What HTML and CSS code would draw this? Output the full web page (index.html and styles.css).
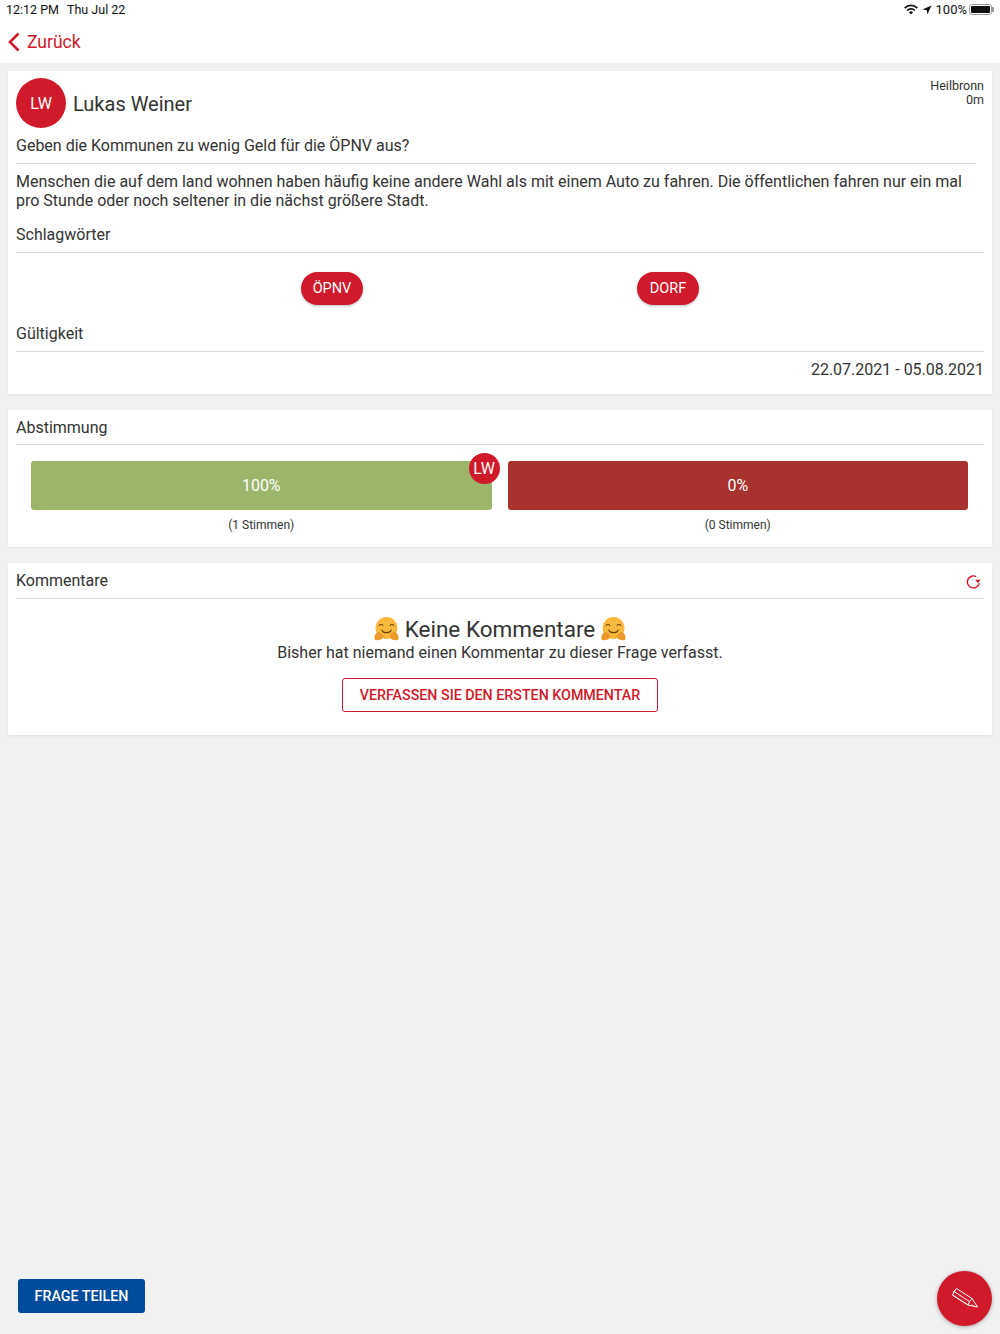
FILE: index.html
```html
<!DOCTYPE html>
<html lang="de">
<head>
  <meta charset="UTF-8">
  <meta name="viewport" content="width=device-width, initial-scale=1.0">
  <title>Frage</title>
  <link rel="stylesheet" href="styles.css">
</head>
<body>

  <svg class="sprite" width="0" height="0">
    <symbol id="hug" viewBox="0 0 24 24">
      <circle cx="12" cy="10.500" r="10.500" fill="#f9b93c"/>
      <path d="M5 8.200c.8-1.600 2.600-1.600 3.400 0M15.600 8.200c.8-1.600 2.600-1.600 3.400 0" fill="none" stroke="#6b4313" stroke-width="1.100" stroke-linecap="round"/>
      <path d="M7.500 12.500c1 3.400 8 3.400 9 0" fill="none" stroke="#6b4313" stroke-width="1.100" stroke-linecap="round"/>
      <path d="M.5 21c-.5-2.400 1-5.500 3-6.500 1.600-.8 4.500 1.500 5.500 3.500.6 1.300 0 2-1 2-.3 1.500-1.500 2.200-2.500 1.800C3.500 22.500 1 22.500.5 21z" fill="#ee9a2b"/>
      <path d="M23.500 21c.5-2.400-1-5.500-3-6.500-1.600-.8-4.500 1.500-5.500 3.500-.6 1.300 0 2 1 2 .3 1.500 1.500 2.200 2.500 1.800 2 .7 4.500.7 5-.8z" fill="#ee9a2b"/>
    </symbol>
  </svg>

  <div class="status-bar">
    <div class="status-left"><span>12:12 PM</span><span>Thu Jul 22</span></div>
    <div class="status-right">
      <svg class="wifi" width="14" height="11" viewBox="0 0 14 11"><path d="M7 10.500 4.900 8.300a3 3 0 0 1 4.200 0zM3.700 7.100 2.500 5.900a6.400 6.400 0 0 1 9 0l-1.200 1.200a4.700 4.700 0 0 0-6.600 0zM1.300 4.700 0 3.500a9.900 9.900 0 0 1 14 0l-1.300 1.200a8.100 8.100 0 0 0-11.400 0z" fill="#111"/></svg>
      <svg width="10" height="10" viewBox="0 0 10 10"><path d="M9.500.5 .5 4.600l4.300.6.600 4.300z" fill="#111"/></svg>
      <span>100%</span>
      <span class="battery"><span class="battery-fill"></span></span>
    </div>
  </div>

  <div class="nav-bar">
    <svg width="14" height="20" viewBox="0 0 14 20"><path d="M11.500 1.500 3 10l8.500 8.500" fill="none" stroke="#d0192a" stroke-width="2.600"/></svg>
    <span>Zurück</span>
  </div>

  <div class="content">
    <div class="card card-question">
      <div class="author">
        <div class="avatar">LW</div>
        <div class="author-name">Lukas Weiner</div>
        <div class="location">Heilbronn<br>0m</div>
      </div>
      <div class="question">Geben die Kommunen zu wenig Geld für die ÖPNV aus?</div>
      <div class="description">Menschen die auf dem land wohnen haben häufig keine andere Wahl als mit einem Auto zu fahren. Die öffentlichen fahren nur ein mal pro Stunde oder noch seltener in die nächst größere Stadt.</div>

      <div class="section-title section-title-tall">Schlagwörter</div>
      <div class="tags">
        <span class="tag">ÖPNV</span>
        <span class="tag">DORF</span>
      </div>

      <div class="section-title section-title-tall">Gültigkeit</div>
      <div class="validity">22.07.2021 - 05.08.2021</div>
    </div>

    <div class="card card-vote">
      <div class="section-title">Abstimmung</div>
      <div class="vote-bars">
        <div class="vote-col">
          <div class="bar bar-yes">100%<span class="bar-badge">LW</span></div>
          <div class="votes">(1 Stimmen)</div>
        </div>
        <div class="vote-col">
          <div class="bar bar-no">0%</div>
          <div class="votes">(0 Stimmen)</div>
        </div>
      </div>
    </div>

    <div class="card card-comments">
      <div class="section-title section-title-icon">
        <span>Kommentare</span>
        <svg width="15" height="15" viewBox="0 0 14 14"><path d="M12.400 8.500A5.600 5.600 0 1 1 9.500 2.400" fill="none" stroke="#d0192a" stroke-width="1.300"/><path d="M8.500 5.300h5.200l-2.600 3z" fill="#d0192a"/></svg>
      </div>
      <div class="empty">
        <div class="empty-title">
          <svg class="emoji" width="25" height="25"><use href="#hug"/></svg>
          <span>Keine Kommentare</span>
          <svg class="emoji" width="25" height="25"><use href="#hug"/></svg>
        </div>
        <div class="empty-text">Bisher hat niemand einen Kommentar zu dieser Frage verfasst.</div>
        <button class="btn-outline">VERFASSEN SIE DEN ERSTEN KOMMENTAR</button>
      </div>
    </div>
  </div>

  <div class="footer">
    <button class="btn-share">FRAGE TEILEN</button>
    <div class="fab">
      <svg width="28" height="24" viewBox="0 0 28 24"><g fill="none" stroke="#fff" stroke-width="1" stroke-linejoin="round"><path d="M3 4.500 5.500 1.500 21 11.500 26.500 20 17 18 1.500 8z"/><path d="M3 4.500 18.500 14.500 21 11.500M1.500 8 17 18l1.500-3.500M5 2.500c-1.500.5-2.500 2-2.500 3.500M21 17.500l2 2"/></g></svg>
    </div>
  </div>

</body>
</html>
```

FILE: styles.css
```css
* {
  box-sizing: border-box;
}

body {
  margin: 0;
  height: 1334px;
  display: flex;
  flex-direction: column;
  background: #f1f1f1;
  color: #333;
  font-family: Roboto, "Noto Sans", sans-serif;
  font-size: 16px;
  overflow: hidden;
}

.sprite {
  display: none;
}

/* Barras de arriba */
.status-bar {
  height: 20px;
  padding: 0 6px 1px;
  display: flex;
  justify-content: space-between;
  align-items: center;
  background: #fff;
  color: #111;
  font-size: 12.500px;
}

.status-left {
  display: flex;
  gap: 8px;
}

.status-right {
  display: flex;
  align-items: center;
  gap: 4px;
  font-size: 13px;
}

.battery {
  position: relative;
  width: 23px;
  height: 11px;
  margin-left: -2px;
  margin-right: 2px;
  padding: 1px;
  border: 1px solid #999;
  border-radius: 3px;
  display: block;
}

.battery::after {
  content: "";
  position: absolute;
  top: 2px;
  right: -3px;
  width: 2px;
  height: 5px;
  background: #999;
  border-radius: 0 1px 1px 0;
}

.battery-fill {
  display: block;
  height: 100%;
  background: #111;
  border-radius: 1px;
}

.nav-bar {
  height: 43px;
  padding: 0 7px 0;
  display: flex;
  align-items: center;
  gap: 6px;
  background: #fff;
  color: #d0192a;
  font-size: 17.500px;
}

.content {
  padding: 8px 8px 0;
  display: flex;
  flex-direction: column;
  gap: 16px;
}

.card {
  background: #fff;
  padding: 0 8px;
  box-shadow: 0 1px 2px rgba(0, 0, 0, 0.08);
}

/* Tarjeta de la pregunta */
.card-question {
  height: 323px;
}

.author {
  height: 64px;
  padding-top: 7px;
  display: flex;
  align-items: flex-start;
}

.avatar {
  width: 50px;
  height: 50px;
  border-radius: 50%;
  display: flex;
  align-items: center;
  justify-content: center;
  background: #d0192a;
  color: #fff;
}

.author-name {
  margin: 14px 0 0 7px;
  font-size: 20px;
  line-height: 24px;
  flex: 1;
}

.location {
  margin-top: 1px;
  font-size: 12.500px;
  line-height: 14px;
  text-align: right;
}

.question {
  height: 29px;
  line-height: 21px;
  padding-bottom: 7px;
  margin-right: 8px;
  border-bottom: 1px solid #d9d9d9;
}

.description {
  margin-top: 8px;
  line-height: 19px;
}

.section-title {
  height: 35px;
  padding-top: 7px;
  line-height: 21px;
  border-bottom: 1px solid #d9d9d9;
}

.section-title-tall {
  height: 37px;
  padding-top: 8px;
}

.description + .section-title {
  margin-top: 6px;
}

.tags {
  height: 62px;
  padding-top: 19px;
  display: flex;
  justify-content: center;
  gap: 274px;
}

.tag {
  width: 62px;
  height: 33px;
  border-radius: 17px;
  display: flex;
  align-items: center;
  justify-content: center;
  background: #d0192a;
  color: #fff;
  font-size: 14.500px;
  box-shadow: 0 1px 3px rgba(0, 0, 0, 0.25);
}

.validity {
  margin-top: 8px;
  line-height: 20px;
  text-align: right;
}

/* Votos */
.card-vote {
  height: 137px;
}

.vote-bars {
  padding: 16px 16px 0 15px;
  display: flex;
  gap: 16px;
}

.vote-col {
  flex: 1;
}

.bar {
  position: relative;
  height: 49px;
  border-radius: 3px;
  display: flex;
  align-items: center;
  justify-content: center;
  color: #fff;
}

.bar-yes {
  background: #9bb56b;
}

.bar-no {
  background: #a8322d;
}

.bar-badge {
  position: absolute;
  top: -8px;
  right: -8px;
  width: 31px;
  height: 31px;
  border-radius: 50%;
  display: flex;
  align-items: center;
  justify-content: center;
  background: #d0192a;
  font-size: 16px;
}

.votes {
  margin-top: 8px;
  font-size: 12px;
  line-height: 15px;
  text-align: center;
}

/* Comentarios */
.card-comments {
  height: 172px;
}

.section-title-icon {
  height: 36px;
  display: flex;
  justify-content: space-between;
}

.section-title-icon svg {
  margin-top: 4px;
  margin-right: 3px;
}

.empty {
  padding-top: 17px;
  display: flex;
  flex-direction: column;
  align-items: center;
}

.empty-title {
  display: flex;
  align-items: center;
  gap: 6px;
  font-size: 22.500px;
  line-height: 26px;
}

.empty-text {
  margin-top: 1px;
  line-height: 20px;
}

.btn-outline {
  width: 316px;
  height: 34px;
  margin-top: 15px;
  padding: 0;
  border: 1px solid #d0192a;
  border-radius: 3px;
  background: #fff;
  color: #d0192a;
  font-family: inherit;
  font-size: 14.250px;
  font-weight: 500;
}

/* Botones de abajo */
.footer {
  margin-top: auto;
  padding: 0 8px 8px 18px;
  display: flex;
  justify-content: space-between;
  align-items: flex-end;
}

.btn-share {
  width: 127px;
  height: 34px;
  margin-bottom: 13px;
  padding: 0;
  border: none;
  border-radius: 3px;
  background: #004b9b;
  color: #fff;
  font-family: inherit;
  font-size: 14.250px;
  font-weight: 500;
}

.fab {
  width: 55px;
  height: 55px;
  border-radius: 50%;
  display: flex;
  align-items: center;
  justify-content: center;
  background: #d0192a;
  box-shadow: 0 1px 4px rgba(0, 0, 0, 0.3);
}
```
